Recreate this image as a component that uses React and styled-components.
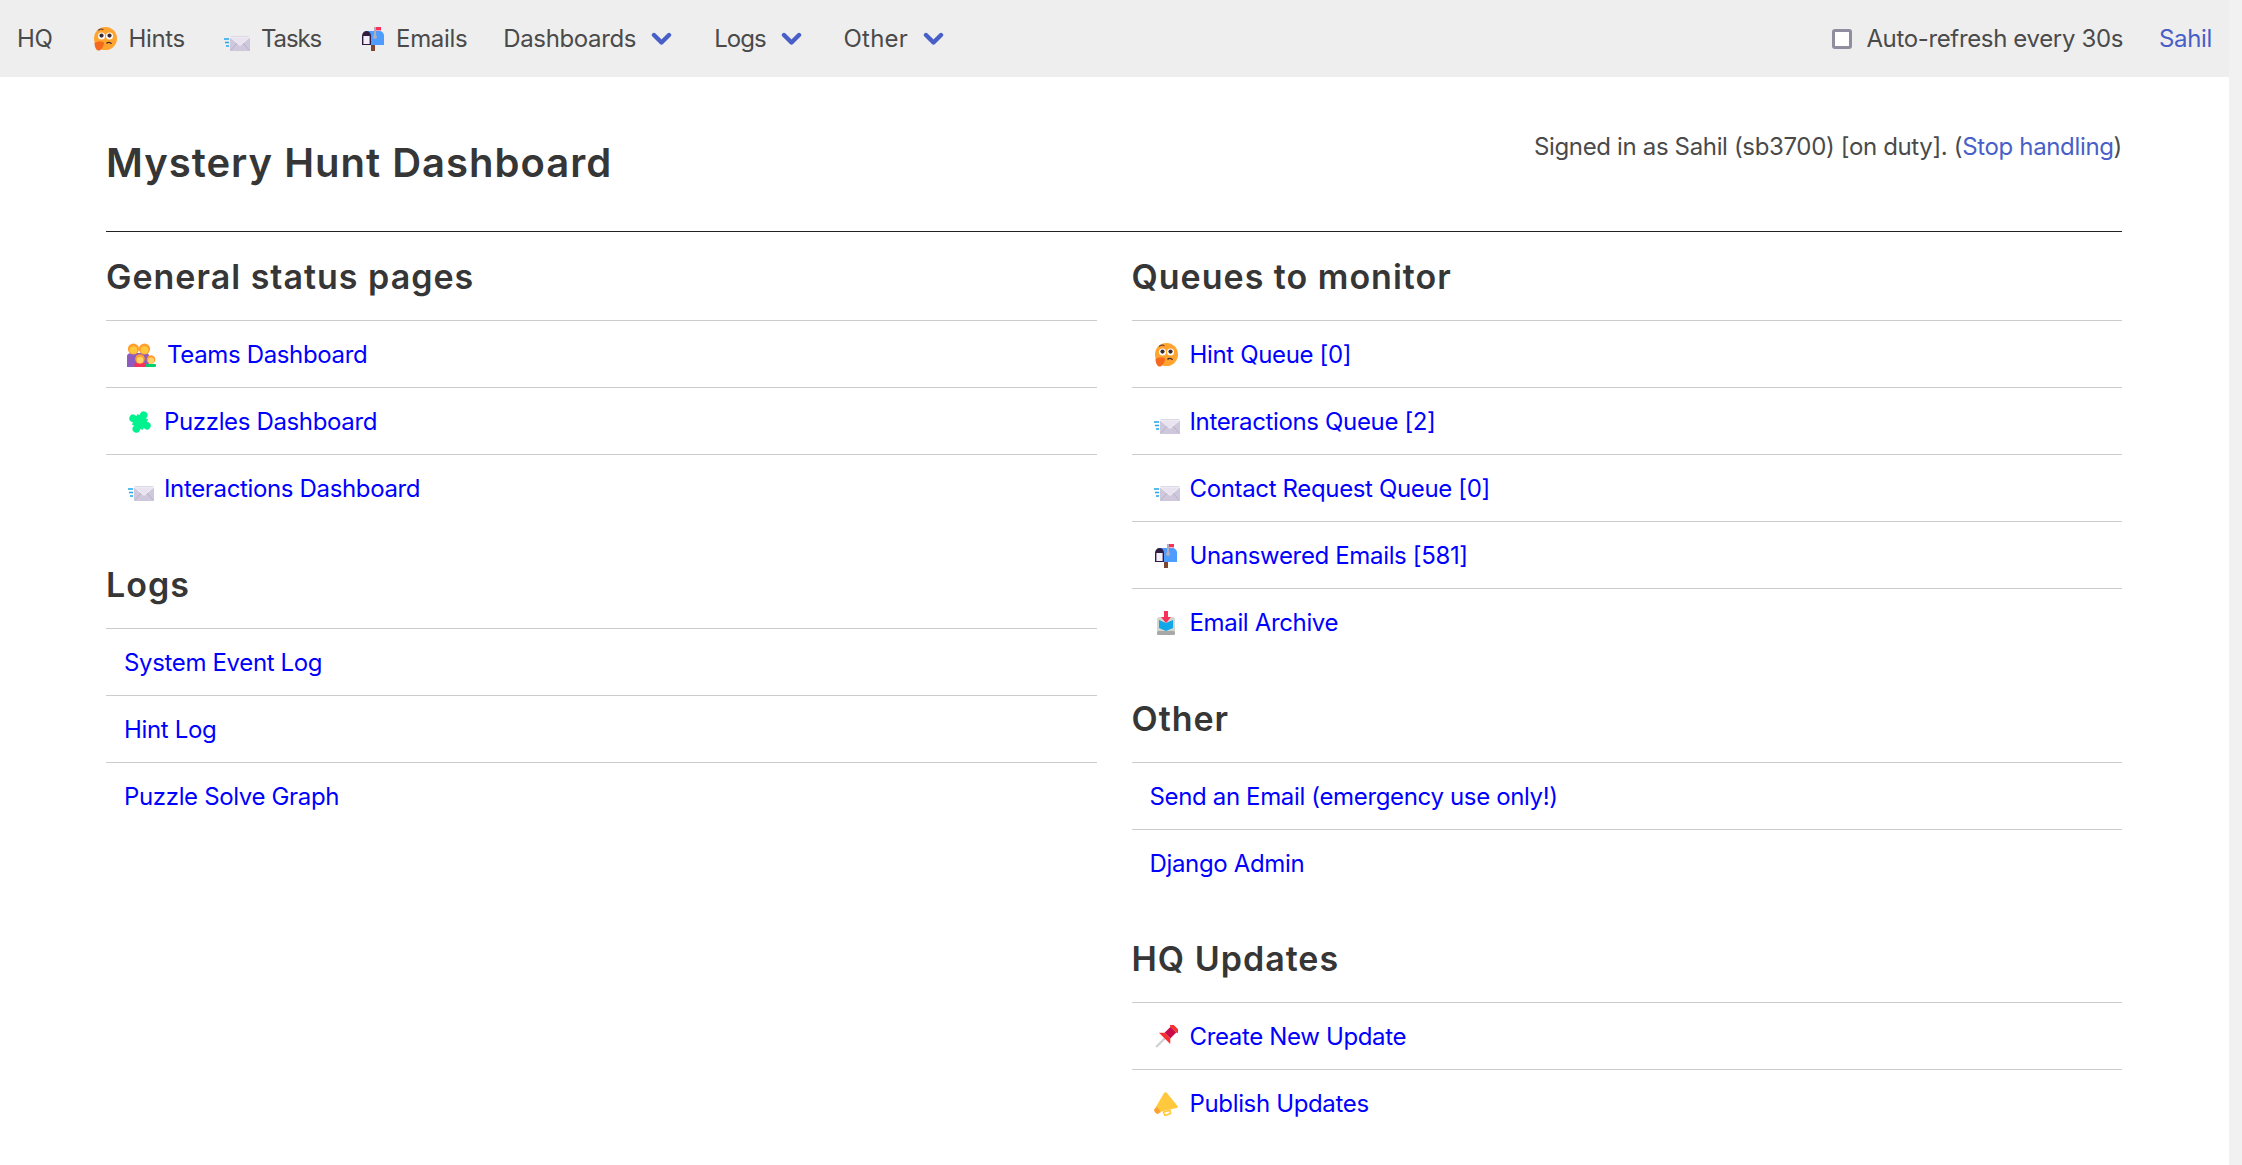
import React from "react";
import styled, { createGlobalStyle } from "styled-components";

const GlobalStyle = createGlobalStyle`
  html, body { margin: 0; padding: 0; height: 100%; overflow: hidden; background: #fff; }
  body { font-family: Inter, "Open Sans", sans-serif; font-size: 24px; letter-spacing: -0.35px; color: #4a4a4a; }
  * { box-sizing: border-box; }
`;

const Shell = styled.div`
  display: flex;
  height: 100vh;
  overflow: hidden;
`;
const Main = styled.div`
  flex: 1;
  min-width: 0;
`;
const ScrollTrack = styled.div`
  width: 13px;
  background: #f1f1f1;
`;

const Navbar = styled.nav`
  display: flex;
  align-items: center;
  justify-content: space-between;
  height: 77px;
  background: #eeeeee;
  padding: 0 17px;
`;
const NavGroup = styled.div`
  display: flex;
  align-items: center;
  gap: 36px;
`;
const NavItem = styled.a`
  display: flex;
  align-items: center;
  color: ${(p) => (p.$link ? "#485fc7" : "#4a4a4a")};
  letter-spacing: ${(p) => (p.$spacing === undefined ? -0.35 : p.$spacing)}px;
  line-height: 36px;
  white-space: nowrap;
`;
const NavDropdown = styled(NavItem)`
  margin-right: 6px;
`;
const Chevron = styled.svg`
  width: 21px;
  height: 14px;
  margin-left: 15px;
`;
const RefreshLabel = styled.label`
  display: flex;
  align-items: center;
  gap: 14px;
  white-space: nowrap;
`;
const Checkbox = styled.input`
  appearance: none;
  width: 20px;
  height: 20px;
  margin: 0;
  background: #fff;
  border: 3px solid #8f8d9f;
  border-radius: 3px;
`;

const Content = styled.div`
  padding: 0 107px 0 106px;
`;
const Header = styled.header`
  display: flex;
  justify-content: space-between;
  align-items: flex-start;
  height: 155px;
  padding-top: 52px;
  border-bottom: 1px solid #222;
`;
const Title = styled.h1`
  margin: 10px 0 0;
  font-size: 40px;
  line-height: 48px;
  font-weight: 600;
  letter-spacing: 1px;
  color: #363636;
`;
const SignedIn = styled.div`
  line-height: 36px;
  a { color: #485fc7; }
`;
const Columns = styled.div`
  display: grid;
  grid-template-columns: 1fr 1fr;
  column-gap: 35px;
  padding-top: 25px;
`;
const Section = styled.section`
  & + & { margin-top: 43.5px; }
`;
const SectionTitle = styled.h2`
  margin: -1px 0 22px;
  font-size: 34px;
  line-height: 42px;
  font-weight: 600;
  letter-spacing: 1px;
  color: #363636;
`;
const Row = styled.div`
  display: flex;
  align-items: center;
  height: 67px;
  padding-left: 18px;
  padding-top: 1px;
  border-top: 1px solid #cccccc;
`;
const RowLink = styled.a`
  color: #0000ff;
  white-space: nowrap;
`;
const IconSlot = styled.span`
  display: inline-flex;
  flex: none;
  width: ${(p) => p.$w || 40}px;
  padding-left: ${(p) => (p.$pad === undefined ? 4 : p.$pad)}px;
`;

const Thinking = () => (
  <svg width="24" height="24" viewBox="0 0 24 24">
    <circle cx="12.5" cy="11.5" r="11.5" fill="#ffa42e" />
    <circle cx="8.5" cy="9" r="3.5" fill="#fff" />
    <circle cx="16.5" cy="9" r="3.5" fill="#fff" />
    <circle cx="8.5" cy="8.6" r="2.1" fill="#402a32" />
    <circle cx="16.5" cy="8.6" r="2.1" fill="#402a32" />
    <path d="M5 3.4 C7 2 9 2 10.5 2.8" stroke="#7d4533" strokeWidth="1.2" fill="none" />
    <path d="M13.5 16.5 C15 15 17 15 18.5 16.8" stroke="#402a32" strokeWidth="1.4" fill="none" />
    <path d="M1.5 16 C4 14 9 14 11 15.5 C11 19 8.5 24 5 23.6 C3 23 1.5 19.5 1.5 16Z" fill="#f4691e" />
  </svg>
);

const Envelope = () => (
  <svg width="26" height="24" viewBox="0 0 26 24">
    <rect x="6" y="9" width="20" height="15" rx="1.5" fill="#cfc7db" />
    <path d="M6 10 L16 18.5 L26 10 Z" fill="#e8e3ef" stroke="#f7f5fa" strokeWidth="0.8" />
    <path d="M6.5 23.5 L13 16 M25.5 23.5 L19 16" stroke="#b3aac1" strokeWidth="0.8" />
    <path d="M0 12h5 M1 15.5h4 M2 19h3" stroke="#1fa8f0" strokeWidth="1.6" />
  </svg>
);

const Mailbox = () => (
  <svg width="24" height="24" viewBox="0 0 24 24">
    <rect x="10" y="17" width="4" height="7" fill="#7d4533" />
    <path d="M6 4 H18 C21 4 23 6 23 9 V18 H6Z" fill="#4d9cff" />
    <path d="M1 9 C1 6 3 4 5.5 4 C8 4 10 6 10 9 V18 H1Z" fill="#321b41" />
    <rect x="2.4" y="9" width="6.2" height="8" fill="#f3eef8" />
    <rect x="13" y="0" width="2" height="10" fill="#b4acbc" />
    <circle cx="14" cy="10" r="2" fill="#b4acbc" />
    <rect x="15" y="0" width="5" height="3.4" fill="#f8315c" />
  </svg>
);

const Family = () => (
  <svg width="29" height="24" viewBox="0 0 29 24">
    <path d="M0 24 V13 C0 11 2 10 5 10 H18 C21 10 22 11 22 13 V24Z" fill="#8e5cbe" />
    <circle cx="6.5" cy="6" r="5.6" fill="#ff9f2e" />
    <circle cx="6.5" cy="7" r="3.8" fill="#ffc83d" />
    <circle cx="17.5" cy="6" r="5.6" fill="#ff9f2e" />
    <circle cx="17.5" cy="7" r="3.8" fill="#ffc83d" />
    <rect x="7.5" y="20" width="11" height="4" rx="1" fill="#f8315c" />
    <circle cx="13" cy="16" r="4.8" fill="#ff9f2e" />
    <circle cx="13" cy="17" r="3.2" fill="#ffd36a" />
    <rect x="19" y="21" width="10" height="3" rx="1" fill="#00d26a" />
    <circle cx="24" cy="16.5" r="4.3" fill="#ff9f2e" />
    <circle cx="24" cy="17.4" r="3" fill="#ffd36a" />
  </svg>
);

const Puzzle = () => (
  <svg width="24" height="24" viewBox="0 0 24 24">
    <g transform="rotate(28 12 12)" fill="#00f28f">
      <rect x="6" y="6" width="12" height="12" />
      <circle cx="12" cy="4.2" r="3.8" />
      <circle cx="19.8" cy="12" r="3.8" />
      <circle cx="12" cy="19.8" r="3.8" />
      <circle cx="4.2" cy="12" r="3.8" />
    </g>
  </svg>
);

const Inbox = () => (
  <svg width="24" height="24" viewBox="0 0 24 24">
    <rect x="3" y="6" width="18" height="18" rx="2.5" fill="#d5d5d0" />
    <rect x="3" y="20" width="18" height="4" rx="1.5" fill="#a8a8a8" />
    <path d="M5 9 L12 12 L19 9 V17 L12 20 L5 17Z" fill="#10a8e8" />
    <path d="M10 0 H14 V6 H17 L12 12 L7 6 H10Z" fill="#f8315c" />
  </svg>
);

const Pin = () => (
  <svg width="24" height="24" viewBox="0 0 24 24">
    <g transform="rotate(45 12 12)">
      <rect x="11" y="13" width="2.2" height="13" fill="#d0d0d0" />
      <rect x="6.5" y="-2" width="11" height="3.5" rx="1" fill="#f8312f" />
      <rect x="8" y="1.5" width="8" height="8.5" fill="#ca0b4a" />
      <path d="M8 10 H16 L20 14 H4Z" fill="#f8312f" />
    </g>
  </svg>
);

const Megaphone = () => (
  <svg width="24" height="24" viewBox="0 0 24 24">
    <path d="M10 1 C11 0 12 0 13 1 L23.5 14 C24 15 23.5 16 22.5 16 L5 20 L1 16.5Z" fill="#ffc83d" />
    <path d="M0 17.5 L3 15 L7 20 L3.5 22 C2 22 0 19.5 0 17.5Z" fill="#ffa22e" />
    <path d="M9.5 20 L16 18.5 L16.5 21.5 L11 23.5Z" fill="none" stroke="#ffc83d" strokeWidth="1.6" />
  </svg>
);

const Arrow = () => (
  <Chevron viewBox="0 0 21 14">
    <path d="M3 3 L10.5 10.5 L18 3" fill="none" stroke="#485fc7" strokeWidth="4.4" strokeLinecap="round" strokeLinejoin="round" />
  </Chevron>
);

const sections = {
  left: [
    {
      title: "General status pages",
      rows: [
        { icon: <Family />, w: 43, pad: 3, label: "Teams Dashboard" },
        { icon: <Puzzle />, label: "Puzzles Dashboard" },
        { icon: <Envelope />, label: "Interactions Dashboard" },
      ],
    },
    {
      title: "Logs",
      rows: [{ label: "System Event Log" }, { label: "Hint Log" }, { label: "Puzzle Solve Graph" }],
    },
  ],
  right: [
    {
      title: "Queues to monitor",
      rows: [
        { icon: <Thinking />, label: "Hint Queue [0]" },
        { icon: <Envelope />, label: "Interactions Queue [2]" },
        { icon: <Envelope />, label: "Contact Request Queue [0]" },
        { icon: <Mailbox />, label: "Unanswered Emails [581]" },
        { icon: <Inbox />, label: "Email Archive" },
      ],
    },
    {
      title: "Other",
      rows: [{ label: "Send an Email (emergency use only!)" }, { label: "Django Admin" }],
    },
    {
      title: "HQ Updates",
      rows: [
        { icon: <Pin />, label: "Create New Update" },
        { icon: <Megaphone />, label: "Publish Updates" },
      ],
    },
  ],
};

function Column({ items }) {
  return (
    <div>
      {items.map((s) => (
        <Section key={s.title}>
          <SectionTitle>{s.title}</SectionTitle>
          {s.rows.map((r) => (
            <Row key={r.label}>
              {r.icon && (
                <IconSlot $w={r.w} $pad={r.pad}>
                  {r.icon}
                </IconSlot>
              )}
              <RowLink>{r.label}</RowLink>
            </Row>
          ))}
        </Section>
      ))}
    </div>
  );
}

function App() {
  return (
    <Shell>
      <GlobalStyle />
      <Main>
        <Navbar>
          <NavGroup>
            <NavItem>HQ</NavItem>
            <NavItem>
              <IconSlot><Thinking /></IconSlot>Hints
            </NavItem>
            <NavItem $spacing={-1.1}>
              <IconSlot $pad={3}><Envelope /></IconSlot>Tasks
            </NavItem>
            <NavItem>
              <IconSlot $w={39}><Mailbox /></IconSlot>Emails
            </NavItem>
            <NavDropdown>Dashboards<Arrow /></NavDropdown>
            <NavDropdown $spacing={-1}>Logs<Arrow /></NavDropdown>
            <NavDropdown $spacing={0.2}>Other<Arrow /></NavDropdown>
          </NavGroup>
          <NavGroup>
            <RefreshLabel>
              <Checkbox type="checkbox" />
              Auto-refresh every 30s
            </RefreshLabel>
            <NavItem $link>Sahil</NavItem>
          </NavGroup>
        </Navbar>
        <Content>
          <Header>
            <Title>Mystery Hunt Dashboard</Title>
            <SignedIn>
              Signed in as Sahil (sb3700) [on duty]. (<a>Stop handling</a>)
            </SignedIn>
          </Header>
          <Columns>
            <Column items={sections.left} />
            <Column items={sections.right} />
          </Columns>
        </Content>
      </Main>
      <ScrollTrack />
    </Shell>
  );
}

export default App;
